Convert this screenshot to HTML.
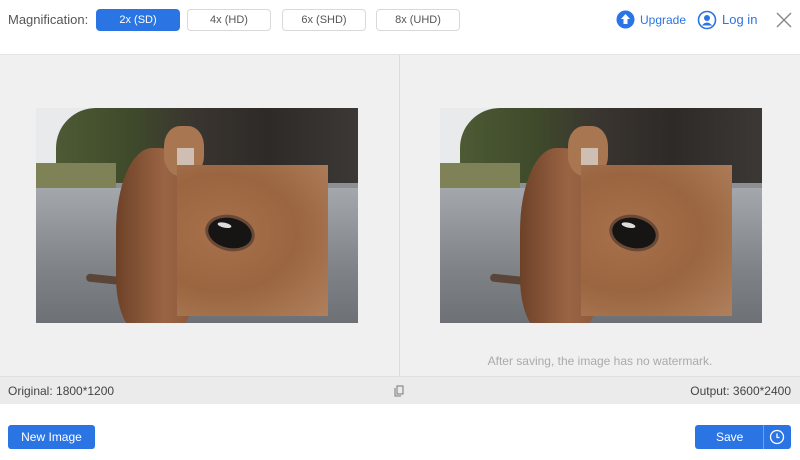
<!DOCTYPE html>
<html><head><meta charset="utf-8"><style>
*{margin:0;padding:0;box-sizing:border-box}
body{width:800px;height:460px;background:#fff;font-family:"Liberation Sans",sans-serif;position:relative;overflow:hidden;color:#333}
.top{position:absolute;left:0;top:0;width:800px;height:55px;border-bottom:1px solid #e4e4e4}
.lab{position:absolute;left:8px;top:12px;font-size:13px;color:#555}
.btn{position:absolute;top:9px;height:22px;width:84px;border:1px solid #d9d9d9;border-radius:4px;font-size:11px;color:#555;text-align:center;line-height:20px;background:#fff}
.btn.on{background:#2b74e4;border-color:#2b74e4;color:#fff}
.main{position:absolute;left:0;top:55px;width:800px;height:321px;background:#f0f0f0}
.div{position:absolute;left:399px;top:55px;width:1px;height:321px;background:#dcdcdc}
.bar{position:absolute;left:0;top:376px;width:800px;height:28px;background:#ebebeb;border-top:1px solid #e0e0e0;font-size:12px;color:#444}
.img{position:absolute;width:322px;height:215px;overflow:hidden;background:#8c8f93}
.sky{position:absolute;left:0;top:0;width:322px;height:60px;background:#e8eaec}
.trees{position:absolute;left:20px;top:0;width:302px;height:75px;background:linear-gradient(90deg,#4d5a34 0%,#3f4a2b 25%,#3a3530 45%,#2e2a27 70%,#3b3835 100%);border-radius:40px 0 0 20px}
.grass{position:absolute;left:0;top:55px;width:80px;height:28px;background:#7f8257}
.road{position:absolute;left:0;top:80px;width:322px;height:135px;background:linear-gradient(180deg,#a4a8ad,#7f8387 60%,#6d7075)}
.body{position:absolute;left:80px;top:40px;width:80px;height:185px;border-radius:45% 45% 30% 30%;background:linear-gradient(90deg,#6e4228,#9a6444 60%,#8a5a3c)}
.head{position:absolute;left:128px;top:18px;width:40px;height:50px;border-radius:40%;background:#a97652}
.tail{position:absolute;left:50px;top:168px;width:50px;height:8px;border-radius:4px;background:#5a4538;transform:rotate(6deg)}
.sel{position:absolute;left:141px;top:40px;width:17px;height:17px;background:#d8d2cc;opacity:.8}
.zoom{position:absolute;left:141px;top:57px;width:151px;height:151px;background:radial-gradient(ellipse at 30% 45%,#a8714c,#9a6540 50%,#b0805c 100%);}
.eye{position:absolute;left:28px;top:50px;width:50px;height:36px;border-radius:50%;background:#161514;border:3px solid #6a4a36;transform:rotate(12deg)}
.eye:after{content:"";position:absolute;left:8px;top:6px;width:14px;height:5px;border-radius:50%;background:#ddd}
.foot{position:absolute;top:425px;height:24px;background:#2b74e4;color:#fff;font-size:12px;text-align:center;line-height:24px;border-radius:3px}
</style></head><body>
<div class="top">
<div class="lab">Magnification:</div>
<div class="btn on" style="left:96px">2x (SD)</div>
<div class="btn" style="left:187px">4x (HD)</div>
<div class="btn" style="left:282px">6x (SHD)</div>
<div class="btn" style="left:376px">8x (UHD)</div>
<svg style="position:absolute;left:616px;top:10px" width="19" height="19" viewBox="0 0 19 19"><circle cx="9.5" cy="9.5" r="9" fill="#2b74e4"/><path d="M9.5 4 L14 9 H11.5 V14 H7.5 V9 H5 Z" fill="#fff"/></svg>
<div style="position:absolute;left:640px;top:13px;font-size:12px;color:#2b74e4">Upgrade</div>
<svg style="position:absolute;left:697px;top:10px" width="20" height="20" viewBox="0 0 20 20"><circle cx="10" cy="10" r="8.5" fill="none" stroke="#2b74e4" stroke-width="1.6"/><circle cx="10" cy="8" r="3" fill="#2b74e4"/><path d="M4.8 15.5 Q10 9.5 15.2 15.5 Z" fill="#2b74e4"/></svg>
<div style="position:absolute;left:722px;top:12px;font-size:13px;color:#2b74e4">Log in</div>
<svg style="position:absolute;left:776px;top:12px" width="16" height="16" viewBox="0 0 16 16"><path d="M1 1L15 15M15 1L1 15" stroke="#888" stroke-width="1.4"/></svg>
</div>
<div class="main"></div>
<div class="div"></div>
<div class="img" style="left:36px;top:108px"><div class="sky"></div><div class="trees"></div><div class="grass"></div><div class="road"></div><div class="tail"></div><div class="body"></div><div class="head"></div><div class="sel"></div><div class="zoom"><div class="eye"></div></div></div>
<div class="img" style="left:440px;top:108px"><div class="sky"></div><div class="trees"></div><div class="grass"></div><div class="road"></div><div class="tail"></div><div class="body"></div><div class="head"></div><div class="sel"></div><div class="zoom"><div class="eye"></div></div></div>
<div style="position:absolute;left:400px;width:400px;top:354px;text-align:center;font-size:12px;color:#aaa">After saving, the image has no watermark.</div>
<div class="bar"><span style="position:absolute;left:8px;top:7px">Original: 1800*1200</span>
<svg style="position:absolute;left:394px;top:8px" width="11" height="12" viewBox="0 0 11 12"><rect x="3" y="1" width="6" height="8" fill="none" stroke="#777"/><path d="M1 3V11H7" fill="none" stroke="#777"/></svg>
<span style="position:absolute;right:9px;top:7px">Output: 3600*2400</span></div>
<div class="foot" style="left:8px;width:87px">New Image</div>
<div class="foot" style="left:695px;width:96px;text-align:left;padding-left:21px">Save</div>
<div style="position:absolute;left:763px;top:425px;width:1px;height:24px;background:#6fa0ee"></div>
<svg style="position:absolute;left:769px;top:429px" width="16" height="16" viewBox="0 0 16 16"><circle cx="8" cy="8" r="6.5" fill="none" stroke="#fff" stroke-width="1.3"/><path d="M8 4.5V8.5H10.5" fill="none" stroke="#fff" stroke-width="1.3"/></svg>
</body></html>
